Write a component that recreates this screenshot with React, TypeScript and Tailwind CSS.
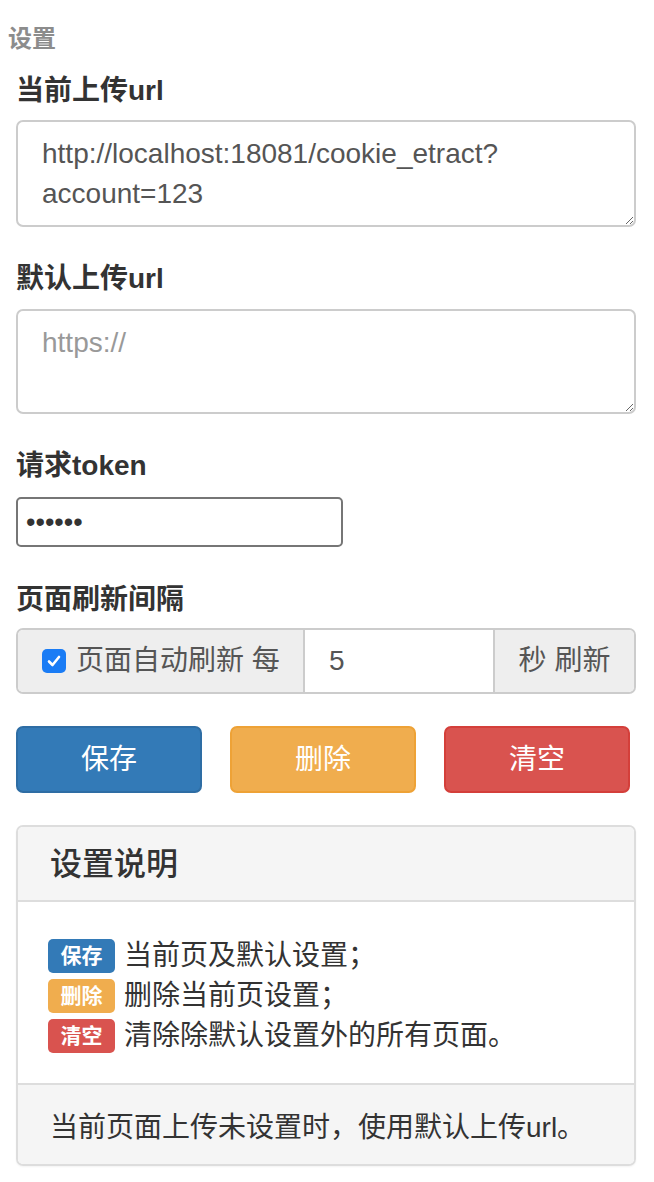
import React from 'react'

function FieldLabel({ children, className = '' }: { children: React.ReactNode; className?: string }) {
  return (
    <div className={`h-[40px] text-[28px] leading-[40px] font-bold text-[#333] ${className}`}>
      {children}
    </div>
  )
}

function Badge({ color, children }: { color: string; children: React.ReactNode }) {
  return (
    <span
      className={`inline-flex items-center justify-center w-[67px] h-[34px] rounded-[5px] text-white text-[21px] font-bold mr-[9px] ${color}`}
    >
      {children}
    </span>
  )
}

export default function App() {
  return (
    <div className="min-h-screen bg-white font-['Liberation_Sans','Noto_Sans_CJK_SC',sans-serif] text-[#333]">
      <div className="px-2 pt-[22px] h-[56px] text-[24px] leading-[34px] font-bold text-[#8c8c8c]">设置</div>

      <div className="px-4 pb-4">
        {/* current url */}
        <FieldLabel className="mt-[15px] mb-[9px]">当前上传url</FieldLabel>
        <textarea
          className="block w-[620px] h-[107px] border-2 border-[#ccc] rounded-[7px] px-[24px] pt-[12px] text-[28px] leading-[40px] text-[#555] outline-none"
          defaultValue="http://localhost:18081/cookie_etract?account=123"
        />

        {/* default url */}
        <FieldLabel className="mt-[32px] mb-[10px]">默认上传url</FieldLabel>
        <textarea
          className="block w-[620px] h-[105px] border-2 border-[#ccc] rounded-[7px] px-[24px] pt-[12px] text-[28px] leading-[40px] text-[#555] placeholder:text-[#999] outline-none"
          placeholder="https://"
        />

        {/* token */}
        <FieldLabel className="mt-[32px] mb-[11px]">请求token</FieldLabel>
        <input
          type="password"
          defaultValue="123456"
          className="block w-[327px] h-[50px] border-2 border-[#767676] rounded-[5px] px-[8px] text-[27px] text-[#333] outline-none"
        />

        {/* refresh interval */}
        <FieldLabel className="mt-[33px] mb-[8px]">页面刷新间隔</FieldLabel>
        <div className="flex w-[620px] h-[66px] border-2 border-[#ccc] rounded-[7px] overflow-hidden">
          <div className="w-[287px] bg-[#eee] flex items-center pl-[24px] text-[28px] text-[#555] border-r-2 border-[#ccc]">
            <span className="w-[24px] h-[24px] shrink-0 rounded-[5px] bg-[#1a7cf5] flex items-center justify-center mr-[10px]">
              <svg width="16" height="16" viewBox="0 0 16 16" fill="none">
                <path d="M3 8.5 L6.5 12 L13 4" stroke="white" strokeWidth="2.6" strokeLinecap="round" strokeLinejoin="round" />
              </svg>
            </span>
            <span>页面自动刷新 每</span>
          </div>
          <input
            type="text"
            defaultValue="5"
            className="w-[188px] h-full px-[24px] text-[28px] text-[#555] outline-none"
          />
          <div className="flex-1 bg-[#eee] flex items-center justify-center text-[28px] text-[#555] border-l-2 border-[#ccc]">
            秒 刷新
          </div>
        </div>

        {/* actions */}
        <div className="mt-[32px] flex gap-[28px]">
          <button className="w-[186px] h-[67px] rounded-[7px] bg-[#337ab7] border-2 border-[#2e6da4] text-white text-[28px]">
            保存
          </button>
          <button className="w-[186px] h-[67px] rounded-[7px] bg-[#f0ad4e] border-2 border-[#eea236] text-white text-[28px]">
            删除
          </button>
          <button className="w-[186px] h-[67px] rounded-[7px] bg-[#d9534f] border-2 border-[#d43f3a] text-white text-[28px]">
            清空
          </button>
        </div>

        {/* help panel */}
        <div className="mt-[32px] w-[620px] border-2 border-[#ddd] rounded-[7px] overflow-hidden shadow-[0_1px_2px_rgba(0,0,0,0.05)]">
          <div className="h-[75px] bg-[#f5f5f5] border-b-2 border-[#ddd] flex items-center px-[32px] text-[32px] font-medium text-[#333]">
            设置说明
          </div>
          <div className="pt-[34px] pb-[27px] px-[30px] text-[28px] leading-[40px] text-[#333]">
            <div className="flex items-center h-[40px]">
              <Badge color="bg-[#337ab7]">保存</Badge>当前页及默认设置；
            </div>
            <div className="flex items-center h-[40px]">
              <Badge color="bg-[#f0ad4e]">删除</Badge>删除当前页设置；
            </div>
            <div className="flex items-center h-[40px]">
              <Badge color="bg-[#d9534f]">清空</Badge>清除除默认设置外的所有页面。
            </div>
          </div>
          <div className="h-[81px] bg-[#f5f5f5] border-t-2 border-[#ddd] flex items-center pt-[6px] px-[32px] text-[28px] text-[#333]">
            当前页面上传未设置时，使用默认上传url。
          </div>
        </div>
      </div>
    </div>
  )
}
